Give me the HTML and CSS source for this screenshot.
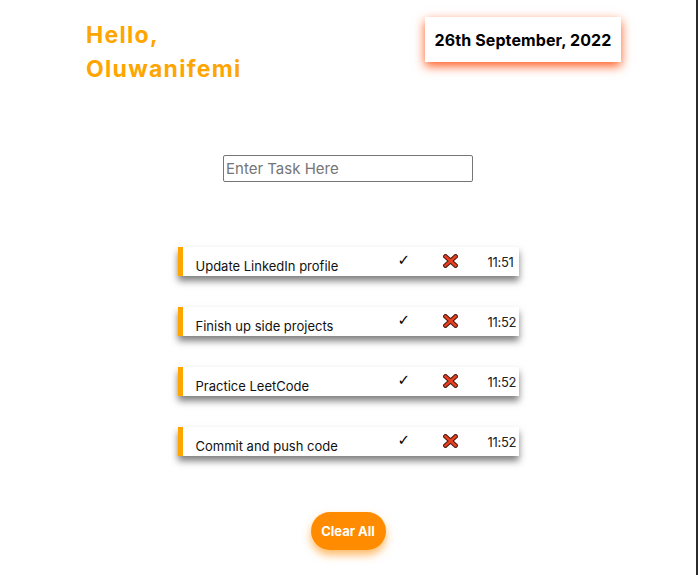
FILE: index.html
```html
<!DOCTYPE html>
<html lang="en">
<head>
<meta charset="utf-8">
<title>Todo</title>
<link rel="stylesheet" href="styles.css">
</head>
<body>
<div class="page">
  <header class="header">
    <h1 class="greeting">Hello,<br>Oluwanifemi</h1>
    <div class="date">26th September, 2022</div>
  </header>
  <div class="entry">
    <input class="task-input" type="text" placeholder="Enter Task Here">
  </div>
  <ul class="tasks">
    <li class="task"><span class="task-text">Update LinkedIn profile</span><span class="check">✓</span><span class="del"><svg width="15" height="14" viewBox="0 0 15 14"><path d="M2.5 2.5 L12.5 11.5 M12.5 2.5 L2.5 11.5" stroke="#4a1a12" stroke-width="4.6" stroke-linecap="square"/><path d="M2.5 2.5 L12.5 11.5 M12.5 2.5 L2.5 11.5" stroke="#e8401f" stroke-width="2.6" stroke-linecap="square"/></svg></span><span class="time">11:51</span></li>
    <li class="task"><span class="task-text">Finish up side projects</span><span class="check">✓</span><span class="del"><svg width="15" height="14" viewBox="0 0 15 14"><path d="M2.5 2.5 L12.5 11.5 M12.5 2.5 L2.5 11.5" stroke="#4a1a12" stroke-width="4.6" stroke-linecap="square"/><path d="M2.5 2.5 L12.5 11.5 M12.5 2.5 L2.5 11.5" stroke="#e8401f" stroke-width="2.6" stroke-linecap="square"/></svg></span><span class="time">11:52</span></li>
    <li class="task"><span class="task-text">Practice LeetCode</span><span class="check">✓</span><span class="del"><svg width="15" height="14" viewBox="0 0 15 14"><path d="M2.5 2.5 L12.5 11.5 M12.5 2.5 L2.5 11.5" stroke="#4a1a12" stroke-width="4.6" stroke-linecap="square"/><path d="M2.5 2.5 L12.5 11.5 M12.5 2.5 L2.5 11.5" stroke="#e8401f" stroke-width="2.6" stroke-linecap="square"/></svg></span><span class="time">11:52</span></li>
    <li class="task"><span class="task-text">Commit and push code</span><span class="check">✓</span><span class="del"><svg width="15" height="14" viewBox="0 0 15 14"><path d="M2.5 2.5 L12.5 11.5 M12.5 2.5 L2.5 11.5" stroke="#4a1a12" stroke-width="4.6" stroke-linecap="square"/><path d="M2.5 2.5 L12.5 11.5 M12.5 2.5 L2.5 11.5" stroke="#e8401f" stroke-width="2.6" stroke-linecap="square"/></svg></span><span class="time">11:52</span></li>
  </ul>
  <div class="actions">
    <button class="clear-btn" type="button">Clear All</button>
  </div>
</div>
</body>
</html>
```
FILE: styles.css
```css
* { box-sizing: border-box; }
html, body { margin: 0; padding: 0; background: #fff; }
body { font-family: Inter, "Noto Sans", sans-serif; color: #111; }
.page {
  width: 698px;
  min-height: 575px;
  border-right: 2px solid #2b2b2b;
  overflow: hidden;
}
.header {
  display: flex;
  justify-content: space-between;
  align-items: flex-start;
  padding: 17px 75px 0 86px;
}
.greeting {
  margin: 1px 0 0;
  font-size: 23px;
  line-height: 34px;
  font-weight: 700;
  letter-spacing: 1.3px;
  color: #ffa500;
}
.date {
  width: 196px;
  height: 45px;
  display: flex;
  align-items: center;
  justify-content: center;
  font-size: 16px;
  font-weight: 700;
  letter-spacing: 0.1px;
  color: #000;
  background: #fff;
  box-shadow: 0 4px 10px #ff5a1e;
}
.entry {
  display: flex;
  justify-content: center;
  margin-top: 69px;
}
.task-input {
  width: 250px;
  height: 27px;
  border: 1px solid #767676;
  border-radius: 2px;
  padding: 1px 2px;
  font-family: inherit;
  font-size: 15px;
  color: #333;
}
.task-input::placeholder { color: #757575; }
.tasks {
  list-style: none;
  margin: 65px 0 0;
  padding: 0;
  display: flex;
  flex-direction: column;
  align-items: center;
  gap: 31px;
}
.task {
  width: 341px;
  height: 29px;
  display: grid;
  grid-template-columns: 202px 45px 45px 25px;
  padding: 0 6px 0 13px;
  border-left: 5px solid #ffa500;
  background: #fff;
  box-shadow: 0 5px 7px rgba(0, 0, 0, 0.5);
  font-size: 13px;
  line-height: 14px;
  color: #111;
}
.task-text { padding-top: 12px; white-space: nowrap; }
.check { padding-top: 6px; font-family: "DejaVu Sans", sans-serif; font-size: 15px; color: #000; }
.del { padding-top: 7px; }
.del svg { display: block; }
.time { padding-top: 8px; color: #222; letter-spacing: -0.3px; white-space: nowrap; }
.actions {
  display: flex;
  justify-content: center;
  margin-top: 56px;
}
.clear-btn {
  width: 75px;
  height: 38px;
  border: none;
  border-radius: 19px;
  background: #ff8c00;
  color: #fff;
  font-family: inherit;
  font-weight: 700;
  font-size: 13px;
  box-shadow: 0 5px 9px rgba(255, 140, 0, 0.6);
}
```
